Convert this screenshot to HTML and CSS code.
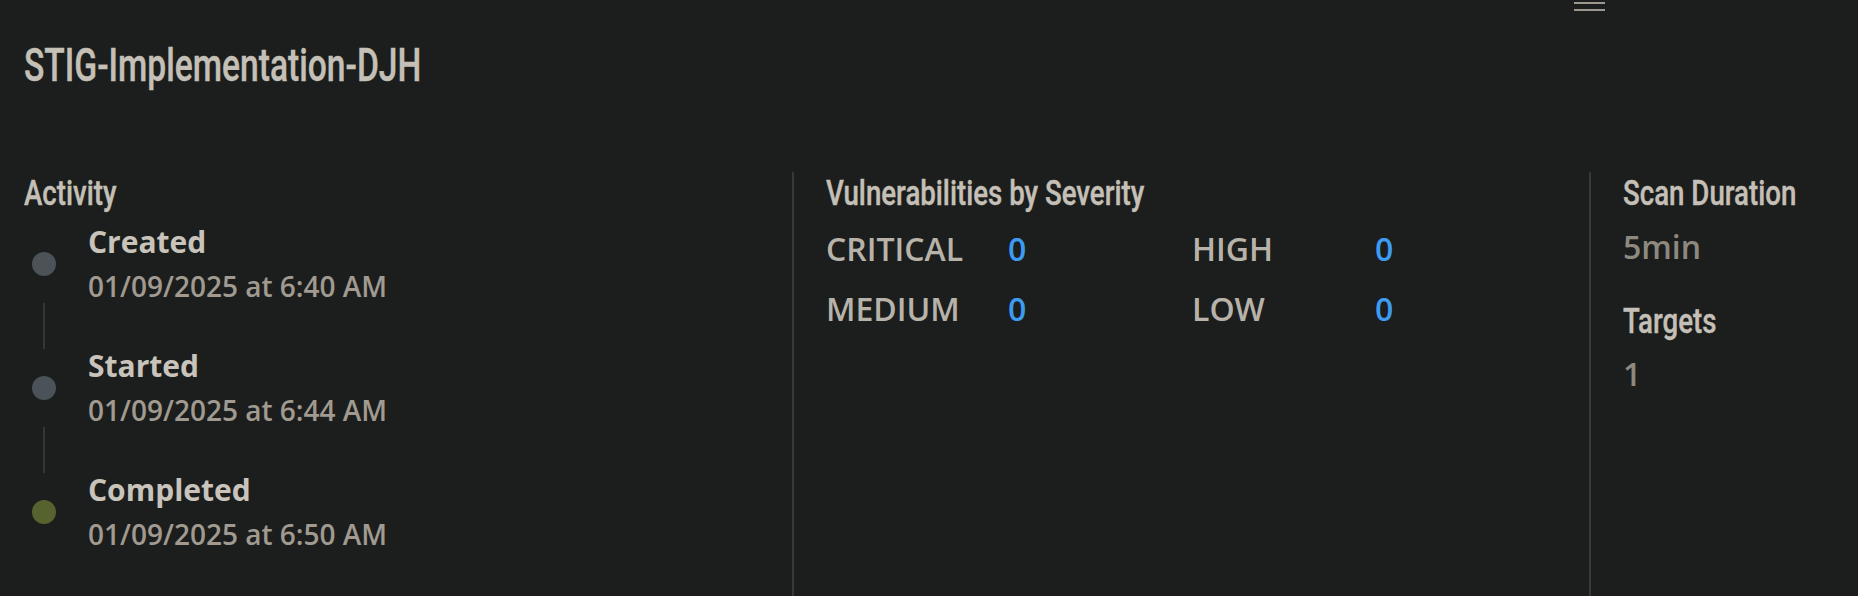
FILE: index.html
```html
<!DOCTYPE html>
<html lang="en">
<head>
<meta charset="utf-8">
<title>STIG-Implementation-DJH</title>
<link rel="stylesheet" href="styles.css">
</head>
<body>
<div class="menu-bar">
  <div class="hamburger" aria-label="Menu">
    <span class="bar"></span>
    <span class="bar"></span>
    <span class="bar"></span>
  </div>
</div>
<h1 class="page-title"><span class="narrow narrow-title">STIG-Implementation-DJH</span></h1>
<div class="sections">
  <section class="col col-activity">
    <h2 class="heading"><span class="narrow">Activity</span></h2>
    <div class="timeline">
      <div class="tl-item">
        <span class="dot dot-gray"></span>
        <div class="tl-text">
          <div class="tl-title">Created</div>
          <div class="tl-date">01/09/2025 at 6:40 AM</div>
        </div>
      </div>
      <div class="tl-connector"></div>
      <div class="tl-item">
        <span class="dot dot-gray"></span>
        <div class="tl-text">
          <div class="tl-title">Started</div>
          <div class="tl-date">01/09/2025 at 6:44 AM</div>
        </div>
      </div>
      <div class="tl-connector"></div>
      <div class="tl-item">
        <span class="dot dot-green"></span>
        <div class="tl-text">
          <div class="tl-title">Completed</div>
          <div class="tl-date">01/09/2025 at 6:50 AM</div>
        </div>
      </div>
    </div>
  </section>
  <section class="col col-vuln">
    <h2 class="heading"><span class="narrow">Vulnerabilities by Severity</span></h2>
    <div class="sev-grid">
      <span class="sev-label">CRITICAL</span><span class="sev-value">0</span>
      <span class="sev-label">HIGH</span><span class="sev-value">0</span>
      <span class="sev-label">MEDIUM</span><span class="sev-value">0</span>
      <span class="sev-label">LOW</span><span class="sev-value">0</span>
    </div>
  </section>
  <section class="col col-stats">
    <h2 class="heading"><span class="narrow">Scan Duration</span></h2>
    <div class="stat-value">5min</div>
    <h2 class="heading heading-spaced"><span class="narrow">Targets</span></h2>
    <div class="stat-value stat-value-tight">1</div>
  </section>
</div>
</body>
</html>
```
FILE: styles.css
```css
html, body {
  margin: 0;
  padding: 0;
  background: #1c1e1d;
}
body {
  font-family: "Open Sans", "Noto Sans", sans-serif;
  color: #c5c0b7;
  overflow: hidden;
  height: 596px;
}
.menu-bar {
  height: 11px;
  display: flex;
  justify-content: flex-end;
  padding-right: 253px;
  overflow: visible;
}
.hamburger {
  width: 31px;
  display: flex;
  flex-direction: column;
  gap: 5px;
  margin-top: -5px;
}
.bar {
  display: block;
  height: 2px;
  background: #9d978d;
}
.narrow {
  display: inline-block;
  white-space: nowrap;
  transform: scaleX(0.79);
  transform-origin: left center;
  -webkit-text-stroke: 0.4px currentColor;
}
.narrow-title {
  transform: scaleX(0.73);
}
.page-title {
  margin: 30px 0 0 24px;
  font-family: Roboto, "Liberation Sans", sans-serif;
  font-weight: 500;
  font-size: 46px;
  line-height: 48px;
  color: #c5c0b7;
}
.sections {
  margin-top: 83px;
  display: flex;
  min-height: 430px;
}
.col {
  padding-top: 2px;
}
.col-activity {
  width: 768px;
  padding-left: 24px;
}
.col-vuln {
  width: 763px;
  border-left: 2px solid #36383d;
  padding-left: 32px;
}
.col-stats {
  flex: 1;
  border-left: 2px solid #36383d;
  padding-left: 32px;
}
.heading {
  margin: 0;
  font-family: Roboto, "Liberation Sans", sans-serif;
  font-weight: 500;
  font-size: 35px;
  line-height: 40px;
  color: #c5c0b7;
}
.timeline {
  margin-top: 11px;
  display: flex;
  flex-direction: column;
}
.tl-item {
  display: flex;
  align-items: center;
  gap: 32px;
}
.dot {
  flex: none;
  width: 24px;
  height: 24px;
  border-radius: 50%;
  margin-left: 8px;
}
.dot-gray { background: #4b5258; }
.dot-green { background: #56632f; }
.tl-connector {
  width: 2px;
  height: 46px;
  margin-left: 19px;
  background: #33373b;
}
.tl-title {
  font-size: 30px;
  font-weight: 700;
  line-height: 34px;
  color: #c9c4bb;
}
.tl-date {
  margin-top: 10px;
  font-size: 28px;
  font-weight: 600;
  line-height: 34px;
  color: #a09a90;
}
.sev-grid {
  margin-top: 13px;
  display: grid;
  grid-template-columns: 182px 184px 183px auto;
  row-gap: 16px;
}
.sev-label {
  font-size: 32px;
  font-weight: 600;
  line-height: 44px;
  color: #b8b3aa;
}
.sev-value {
  font-size: 32px;
  font-weight: 600;
  line-height: 44px;
  color: #3d9cf2;
}
.stat-value {
  margin-top: 11px;
  font-size: 32px;
  font-weight: 600;
  line-height: 44px;
  color: #8e897f;
}
.heading-spaced {
  margin-top: 33px;
}
.stat-value-tight {
  margin-top: 10px;
}
```
